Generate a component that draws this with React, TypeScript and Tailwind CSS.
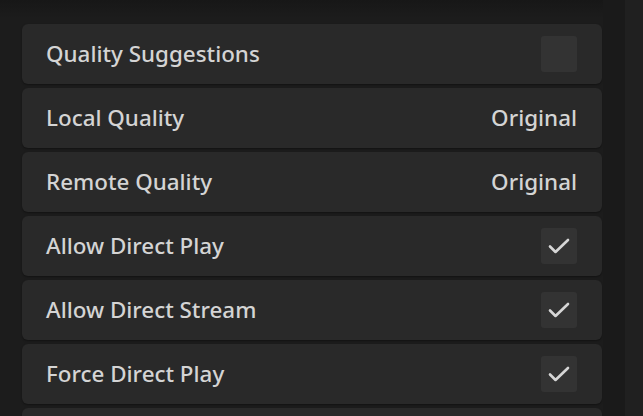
import { ReactNode } from "react";

type Row = {
  label: string;
  value?: string;
  checked?: boolean;
};

const rows: Row[] = [
  { label: "Quality Suggestions", checked: false },
  { label: "Local Quality", value: "Original" },
  { label: "Remote Quality", value: "Original" },
  { label: "Allow Direct Play", checked: true },
  { label: "Allow Direct Stream", checked: true },
  { label: "Force Direct Play", checked: true },
];

const CheckBox = ({ checked }: { checked: boolean }) => (
  <div className="w-[36px] h-[36px] rounded-[3px] bg-[#333333] flex items-center justify-center">
    {checked && (
      <svg width="36" height="36" viewBox="0 0 36 36" fill="none">
        <path
          d="M9 18.5 14.5 24 27 12"
          stroke="#d6d6d6"
          strokeWidth="2.6"
          strokeLinecap="round"
          strokeLinejoin="round"
        />
      </svg>
    )}
  </div>
);

const SettingRow = ({ label, right }: { label?: string; right?: ReactNode }) => (
  <div className="h-[60px] shrink-0 rounded-[6px] bg-[#292929] pl-[24px] pr-[25px] flex items-center justify-between shadow-[0_1px_2px_rgba(0,0,0,0.35)]">
    <span className="text-[22.4px] font-medium text-[#d4d4d4]">{label}</span>
    {right}
  </div>
);

export default function App() {
  return (
    <div
      className="w-[643px] h-[416px] overflow-hidden flex bg-[linear-gradient(to_bottom,#171717_0px,#1c1c1c_18px)]"
      style={{ fontFamily: '"Noto Sans", "Open Sans", sans-serif' }}
    >
      {/* settings list */}
      <div className="w-[603px] shrink-0 pl-[22px] pr-[1px] pt-[24px] flex flex-col gap-[4px]">
        {rows.map((row) => (
          <SettingRow
            key={row.label}
            label={row.label}
            right={
              row.value ? (
                <span className="text-[22.4px] font-medium text-[#d4d4d4]">{row.value}</span>
              ) : (
                <CheckBox checked={!!row.checked} />
              )
            }
          />
        ))}
        {/* next row, scrolled below the fold */}
        <SettingRow />
      </div>
      {/* scrollbar gutter */}
      <div className="w-[22px] shrink-0 bg-[#1a1a1a]" />
      <div className="flex-1 bg-[#202020]" />
    </div>
  );
}
